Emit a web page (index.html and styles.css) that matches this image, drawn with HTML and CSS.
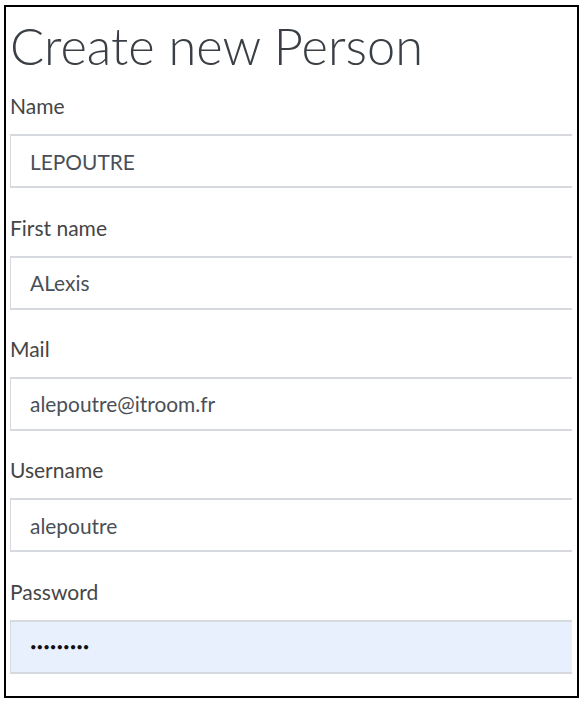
FILE: index.html
```html
<!DOCTYPE html>
<html lang="en">
<head>
<meta charset="utf-8">
<title>Create new Person</title>
<link rel="stylesheet" href="styles.css">
</head>
<body>
<div class="frame">
  <h1 class="title">Create new Person</h1>
  <form class="form">
    <div class="field">
      <label class="label" for="name">Name</label>
      <input class="input" id="name" type="text" value="LEPOUTRE">
    </div>
    <div class="field">
      <label class="label" for="first">First name</label>
      <input class="input" id="first" type="text" value="ALexis">
    </div>
    <div class="field">
      <label class="label" for="mail">Mail</label>
      <input class="input" id="mail" type="text" value="alepoutre@itroom.fr">
    </div>
    <div class="field">
      <label class="label" for="user">Username</label>
      <input class="input" id="user" type="text" value="alepoutre">
    </div>
    <div class="field">
      <label class="label" for="pass">Password</label>
      <input class="input input-filled" id="pass" type="password" value="123456789">
    </div>
  </form>
</div>
</body>
</html>
```

FILE: styles.css
```css
* { box-sizing: border-box; }
html, body { margin: 0; padding: 0; background: #fff; }
body { font-family: Lato, "Noto Sans", sans-serif; }

.frame {
  margin: 5px 0 0 4px;
  width: 575px;
  height: 693px;
  border: 2px solid #000;
  padding: 0 5px 0 4px;
  overflow: hidden;
}

.title {
  margin: 9px 0 0;
  font-size: 50.6px;
  line-height: 60px;
  font-weight: 300;
  color: #3a3f45;
}

.form {
  display: flex;
  flex-direction: column;
  gap: 27.3px;
  margin-top: 18.4px;
}

.field {
  display: flex;
  flex-direction: column;
  gap: 16px;
}

.label {
  font-size: 21px;
  line-height: 24px;
  color: #454545;
}

.input {
  display: block;
  width: 100%;
  height: 54px;
  margin: 0;
  padding: 0 19px;
  border: 1px solid #d6dadf;
  border-top-width: 2px;
  border-bottom-width: 2px;
  border-right: 0;
  border-radius: 0;
  background: #fff;
  font-family: Lato, "Noto Sans", sans-serif;
  font-size: 20.9px;
  color: #4a4f57;
  outline: none;
}

.input-filled {
  background: #e8f0fe;
  color: #111;
  font-size: 11.4px;
}
```
